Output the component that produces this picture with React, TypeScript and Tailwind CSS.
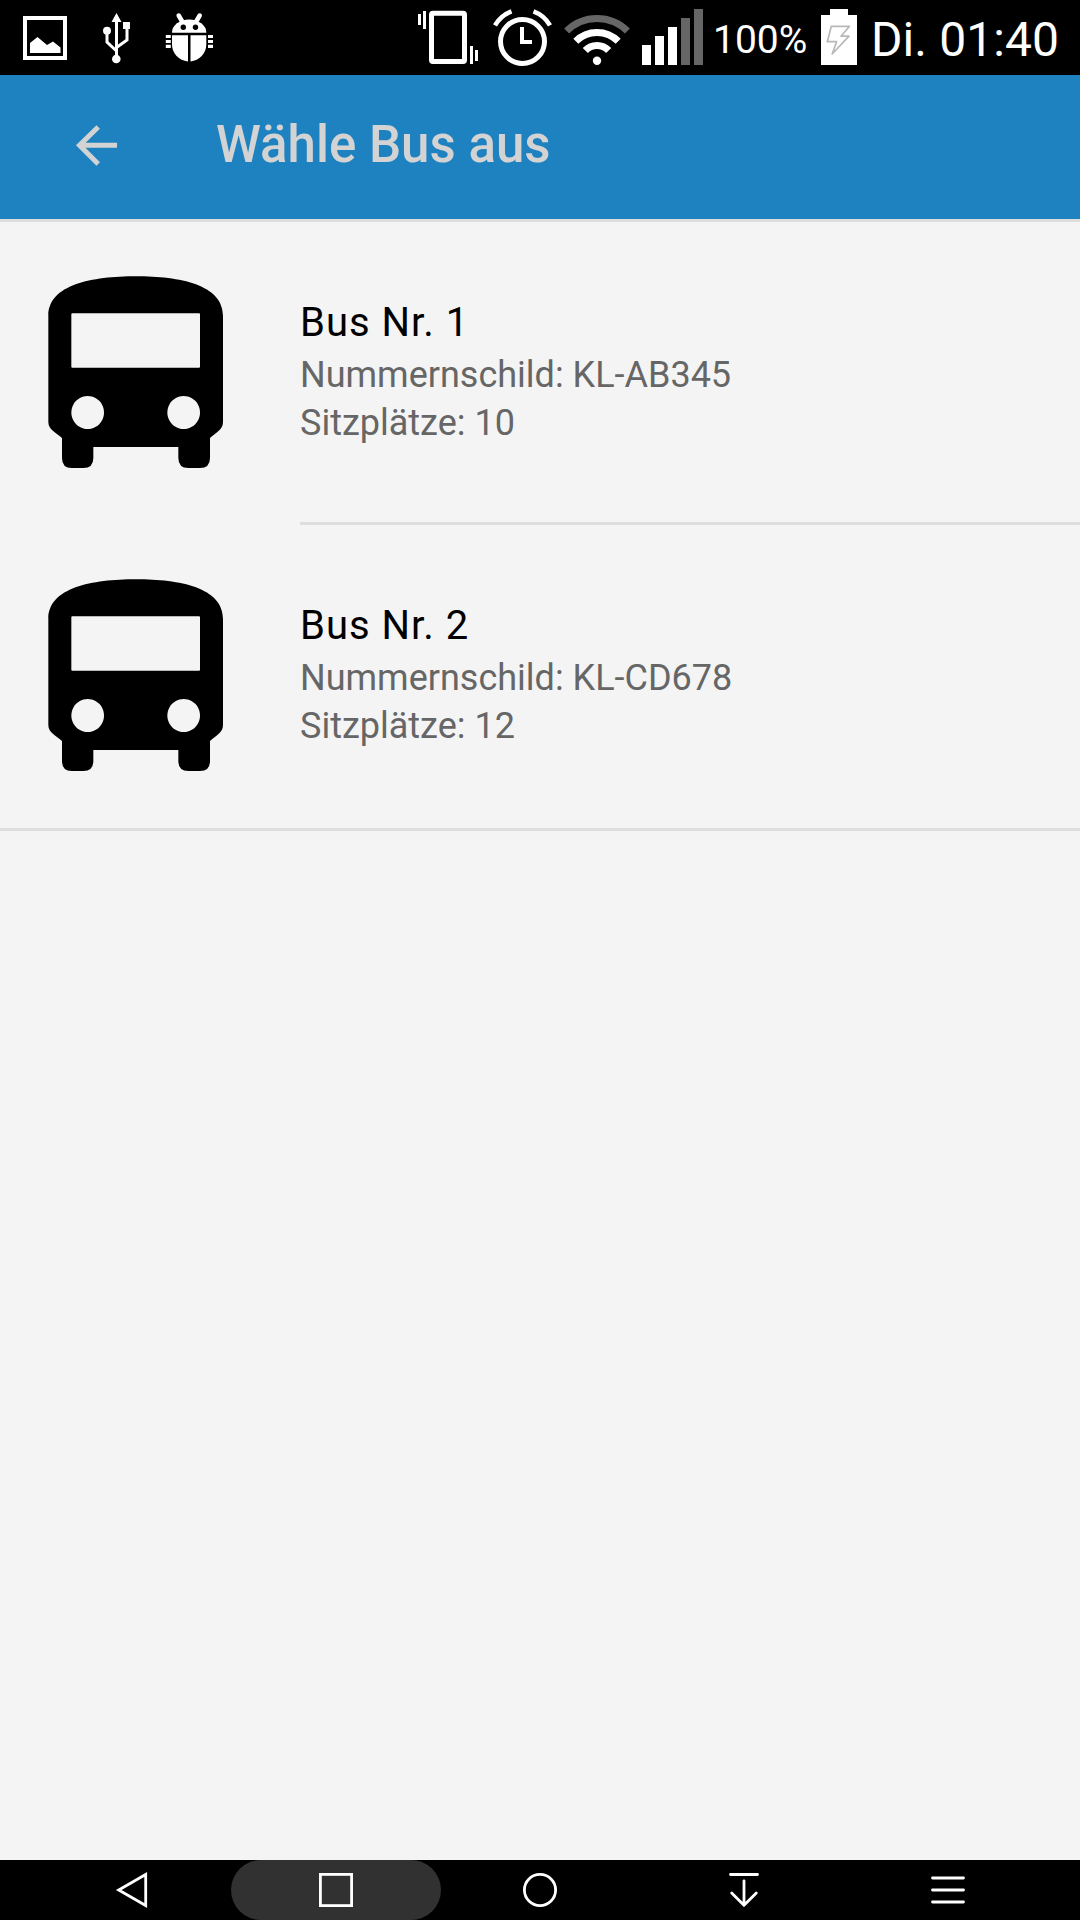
import React from "react";

const buses = [
  { name: "Bus Nr. 1", plate: "KL-AB345", seats: 10 },
  { name: "Bus Nr. 2", plate: "KL-CD678", seats: 12 },
];

function NotificationIcons() {
  return (
    <svg className="h-[75px] w-[240px]" viewBox="0 0 240 75" fill="none" stroke="#fff">
      <rect x="25" y="18" width="40" height="40" strokeWidth="4" />
      <path d="M30 43l7.5-6L47 45l6-3.5 7.5 6V53H30z" fill="#fff" stroke="none" />
      <path d="M116.5 13l5 9h-10zM123 22h7v7h-7z" fill="#fff" stroke="none" />
      <circle cx="107" cy="30.7" r="4" fill="#fff" stroke="none" />
      <circle cx="116.3" cy="59" r="4.3" fill="#fff" stroke="none" />
      <path d="M116.5 21v35M107 33v9l9.5 9M127 28v12l-10.5 7.5" strokeWidth="3" />
      <path d="M178.7 15.5l3.5 6M199.7 15.5l-3.5 6" strokeWidth="4.5" strokeLinecap="round" />
      <path d="M172 32.7a17 13.2 0 0 1 34.3 0z" fill="#fff" stroke="none" />
      <path d="M172 35.2h16v26.2c-9-1-16-8-16-17zM206.3 35.2h-15.8v26.2c9-1 15.8-8 15.8-17z" fill="#fff" stroke="none" />
      <circle cx="183.3" cy="27.2" r="2.7" fill="#000" stroke="none" />
      <circle cx="195.5" cy="27.2" r="2.7" fill="#000" stroke="none" />
      <path d="M165.8 36.5h5M165.8 41.5h5M165.8 46.3h5M208 36.5h5M208 41.5h5M208 46.3h5" strokeWidth="3.2" />
    </svg>
  );
}

function SystemIcons() {
  return (
    <svg className="h-[75px] w-[304px]" viewBox="400 0 304 75" fill="none" stroke="#fff">
      <rect x="431.5" y="13.3" width="33" height="48.3" rx="1.5" strokeWidth="5" />
      <path d="M419.5 14v11M424.5 11v18M471.5 46v18M476.5 50v11" strokeWidth="3" />
      <circle cx="522.5" cy="41.5" r="22" strokeWidth="5" />
      <path d="M522 27v15h10" strokeWidth="4" />
      <path d="M495 25.3a32 32 0 0 1 16.5-14M550 25.3a32 32 0 0 0-16.5-14" strokeWidth="4.6" />
      <path d="M566.6 31.1a43 43 0 0 1 60.8 0" stroke="#666" strokeWidth="7" />
      <path d="M575.8 41.3a30 30 0 0 1 42.4 0M585.3 50.5a16 16 0 0 1 23.4 0" strokeWidth="7" />
      <circle cx="597" cy="60.8" r="4.2" fill="#fff" stroke="none" />
      <path d="M642 45h9v20h-9zM655 36h9v29h-9zM668 27h9v38h-9z" fill="#fff" stroke="none" />
      <path d="M681 18h9v47h-9zM694 9h9v56h-9z" fill="#666" stroke="none" />
    </svg>
  );
}

function BatteryIcon() {
  return (
    <svg className="h-[75px] w-9" viewBox="821 0 36 75">
      <path d="M821 15h9V9h18v6h9v50h-36z" fill="#fff" />
      <path d="M831.3 26.3h18.2L841 36.2h8L832.2 54l4.4-12.3h-9.3z" fill="none" stroke="#b8b8b8" strokeWidth="1.7" strokeLinejoin="round" />
    </svg>
  );
}

function BusIcon() {
  return (
    <svg className="mt-[38px] ml-[30px] size-[220px] shrink-0" viewBox="0 0 660 660">
      <path
        fillRule="evenodd"
        d="M318 49C450 49 579 74 579 168V486C579 510 558 517 540 534V594Q540 624 510 624H475Q445 624 445 594V561H190V594Q190 624 160 624H125Q96 624 96 594V534C78 517 55 510 55 486V168C55 74 186 49 318 49ZM127 160Q124 160 124 163V320Q124 323 127 323H507Q510 323 510 320V163Q510 160 507 160ZM173 408a49 49.500 0 1 0 .1 0ZM461 408a49 49.500 0 1 0 .1 0Z"
      />
    </svg>
  );
}

function NavIcon({ children }: { children: React.ReactNode }) {
  return (
    <svg className="h-[60px] w-[60px]" viewBox="-30 -30 60 60" fill="none" stroke="#fff" strokeWidth="2.800">
      {children}
    </svg>
  );
}

export default function App() {
  return (
    <div className="flex h-[1920px] w-[1080px] flex-col overflow-hidden bg-[#f4f4f4] font-['Roboto',sans-serif]">
      <div className="flex h-[75px] shrink-0 bg-black text-white">
        <NotificationIcons />
        <div className="ml-[160px]">
          <SystemIcons />
        </div>
        <div className="ml-[9px] w-[108px] pt-[17px] text-[39px] leading-[46px] whitespace-nowrap">100%</div>
        <BatteryIcon />
        <div className="ml-[14px] pt-[12px] text-[48px] leading-[56px] tracking-[0.1px] whitespace-nowrap">Di. 01:40</div>
      </div>

      <header className="flex h-[147px] shrink-0 items-center border-b-[3px] border-[#ddd] bg-[#1f82c0] pb-[4px] text-[#d3d3d3]">
        <svg className="ml-[72px] size-[50px]" viewBox="72 120 50 50" fill="none" stroke="currentColor" strokeWidth="5">
          <path d="M117 145.300H80M98.200 127L79.500 145.300l18.700 18.700" />
        </svg>
        <h1 className="ml-[94px] text-[51px] leading-[60px] font-medium whitespace-nowrap">Wähle Bus aus</h1>
      </header>

      <main className="flex-1">
        <ul className="border-b-[3px] border-[#ddd]">
          {buses.map((bus, i) => (
            <li key={bus.name} className="flex h-[303px]">
              <BusIcon />
              <div className={i === 0 ? "ml-[50px] flex-1 border-b-[3px] border-[#ddd] pt-[77px]" : "ml-[50px] flex-1 pt-[77px]"}>
                <h2 className="text-[40px] leading-[48px] tracking-[1px] text-black">{bus.name}</h2>
                <p className="mt-[4px] text-[36px] leading-[48px] text-[#666]">Nummernschild: {bus.plate}</p>
                <p className="text-[36px] leading-[48px] text-[#666]">Sitzplätze: {bus.seats}</p>
              </div>
            </li>
          ))}
        </ul>
      </main>

      <nav className="grid h-[60px] shrink-0 grid-cols-5 bg-black px-[30px]">
        <div className="flex justify-center">
          <NavIcon><path d="M13.700-15.500v31L-13.300 0z" /></NavIcon>
        </div>
        <div className="-mx-[3px] flex justify-center rounded-full bg-[#313131]">
          <NavIcon><rect x="-15.600" y="-15.600" width="31.200" height="31.200" /></NavIcon>
        </div>
        <div className="flex justify-center">
          <NavIcon><circle r="15.600" /></NavIcon>
        </div>
        <div className="flex justify-center">
          <NavIcon><path strokeLinecap="round" d="M-13.500-15.500h27M0-9.200V15.200M-12.300 3L0 15.300 12.300 3" /></NavIcon>
        </div>
        <div className="flex justify-center">
          <NavIcon><path strokeLinecap="round" d="M-15.500-12h31M-15.500 0h31M-15.500 12h31" /></NavIcon>
        </div>
      </nav>
    </div>
  );
}
